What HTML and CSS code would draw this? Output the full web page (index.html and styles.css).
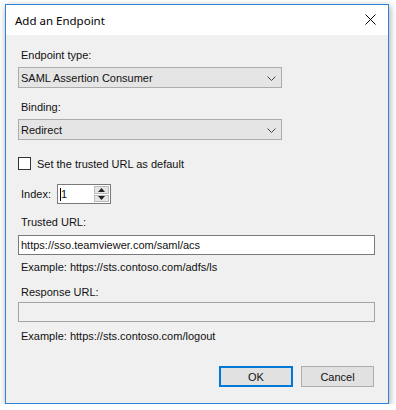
FILE: index.html
```html
<!DOCTYPE html>
<html>
<head>
    <meta charset="utf-8">
    <title>Add an Endpoint</title>
    <link rel="stylesheet" href="styles.css">
</head>
<body>
    <div class="dialog">
        <div class="titlebar">
            <span class="title">Add an Endpoint</span>
            <span class="close">
                <svg width="11" height="11" viewBox="0 0 11 11">
                    <path d="M0.5 0.5 L10.5 10.5 M10.5 0.5 L0.5 10.5" stroke="#000" stroke-width="1" fill="none"/>
                </svg>
            </span>
        </div>
        <form class="content">
            <label class="field-label first">Endpoint type:</label>
            <div class="select">
                <span>SAML Assertion Consumer</span>
                <svg class="chevron" width="9" height="5" viewBox="0 0 9 5"><path d="M0.5 0.5 L4.5 4.5 L8.5 0.5" stroke="#444" fill="none"/></svg>
            </div>

            <label class="field-label second">Binding:</label>
            <div class="select">
                <span>Redirect</span>
                <svg class="chevron" width="9" height="5" viewBox="0 0 9 5"><path d="M0.5 0.5 L4.5 4.5 L8.5 0.5" stroke="#444" fill="none"/></svg>
            </div>

            <div class="check-row">
                <span class="checkbox"></span>
                <span>Set the trusted URL as default</span>
            </div>

            <div class="index-row">
                <span class="index-label">Index:</span>
                <div class="spinner">
                    <div class="spinner-value"><span class="caret"></span>1</div>
                    <div class="spin-buttons">
                        <span class="spin up"><svg width="7" height="4" viewBox="0 0 7 4"><path d="M3.5 0 L7 4 L0 4 Z" fill="#222"/></svg></span>
                        <span class="spin down"><svg width="7" height="4" viewBox="0 0 7 4"><path d="M0 0 L7 0 L3.5 4 Z" fill="#222"/></svg></span>
                    </div>
                </div>
            </div>

            <label class="field-label trusted">Trusted URL:</label>
            <div class="textbox">https://sso.teamviewer.com/saml/acs</div>
            <div class="hint first-hint">Example: https://sts.contoso.com/adfs/ls</div>

            <label class="field-label response">Response URL:</label>
            <div class="textbox disabled"></div>
            <div class="hint second-hint">Example: https://sts.contoso.com/logout</div>

            <div class="buttons">
                <button type="button" class="btn btn-default">OK</button>
                <button type="button" class="btn">Cancel</button>
            </div>
        </form>
    </div>
</body>
</html>
```
FILE: styles.css
```css
body {
  margin: 0;
  background-color: #fff;
  font-family: "Liberation Sans", Arial, sans-serif;
  font-size: 11px;
  color: #111;
}
.dialog {
  box-sizing: border-box;
  width: 384px;
  height: 400px;
  margin: 4px 0 0 5px;
  border: 1px solid #2b84d9;
  background-color: #f0f0f0;
  box-shadow: 1px 2px 7px rgba(0,0,0,.35);
  display: flex;
  flex-direction: column;
}
.titlebar {
  height: 30px;
  background-color: #fff;
  display: flex;
  align-items: center;
  justify-content: space-between;
  padding: 0 12px 0 9px;
}
.title {
  font-family: "Noto Sans", "Open Sans", sans-serif;
  font-size: 11.5px;
  color: #000;
}
.close {
  display: flex;
  margin-top: -1px;
}
.content {
  display: flex;
  flex-direction: column;
  padding: 0 0 0 12px;
  margin: 0;
}
.field-label {
  display: block;
  line-height: 13px;
  padding-left: 3px;
}
.field-label.first { margin-top: 14px; }
.field-label.second { margin-top: 13px; }
.field-label.trusted { margin-top: 12px; }
.field-label.response { margin-top: 12px; }

.select {
  box-sizing: border-box;
  width: 264px;
  height: 21px;
  margin-top: 5px;
  background-color: #e5e5e5;
  border: 1px solid #acacac;
  display: flex;
  align-items: center;
  justify-content: space-between;
  padding: 0 5px 0 2px;
}
.chevron {
  margin-top: 1px;
}

.check-row {
  display: flex;
  align-items: center;
  gap: 6px;
  margin-top: 17px;
  height: 13px;
}
.checkbox {
  box-sizing: border-box;
  width: 13px;
  height: 13px;
  background-color: #fff;
  border: 1px solid #333;
}

.index-row {
  display: flex;
  align-items: center;
  margin-top: 14px;
  height: 20px;
}
.index-label {
  padding-left: 3px;
  width: 36px;
}
.spinner {
  box-sizing: border-box;
  width: 54px;
  height: 20px;
  background-color: #fff;
  border: 1px solid #7a7a7a;
  display: flex;
}
.spinner-value {
  flex: 1;
  display: flex;
  align-items: center;
  padding-left: 2px;
}
.caret {
  width: 1px;
  height: 13px;
  background-color: #000;
}
.spin-buttons {
  width: 15px;
  display: flex;
  flex-direction: column;
  gap: 1px;
  padding: 1px;
}
.spin {
  flex: 1;
  background-color: #e5e5e5;
  border: 1px solid #bcbcbc;
  display: flex;
  align-items: center;
  justify-content: center;
}

.textbox {
  box-sizing: border-box;
  width: 357px;
  height: 20px;
  margin-top: 6px;
  background-color: #fff;
  border: 1px solid #7a7a7a;
  padding: 0 2px;
  line-height: 18px;
}
.textbox.disabled {
  margin-top: 3px;
  background-color: #f0f0f0;
  border-color: #a5a5a5;
}
.hint {
  line-height: 13px;
  padding-left: 3px;
}
.first-hint { margin-top: 6px; }
.second-hint { margin-top: 8px; }

.buttons {
  display: flex;
  gap: 8px;
  margin-top: 23px;
  padding-left: 201px;
}
.btn {
  box-sizing: border-box;
  width: 73px;
  height: 21px;
  background-color: #e1e1e1;
  border: 1px solid #adadad;
  font-family: "Liberation Sans", Arial, sans-serif;
  font-size: 11px;
  color: #111;
  padding: 0;
}
.btn-default {
  width: 74px;
  border: 2px solid #0078d7;
}
```
